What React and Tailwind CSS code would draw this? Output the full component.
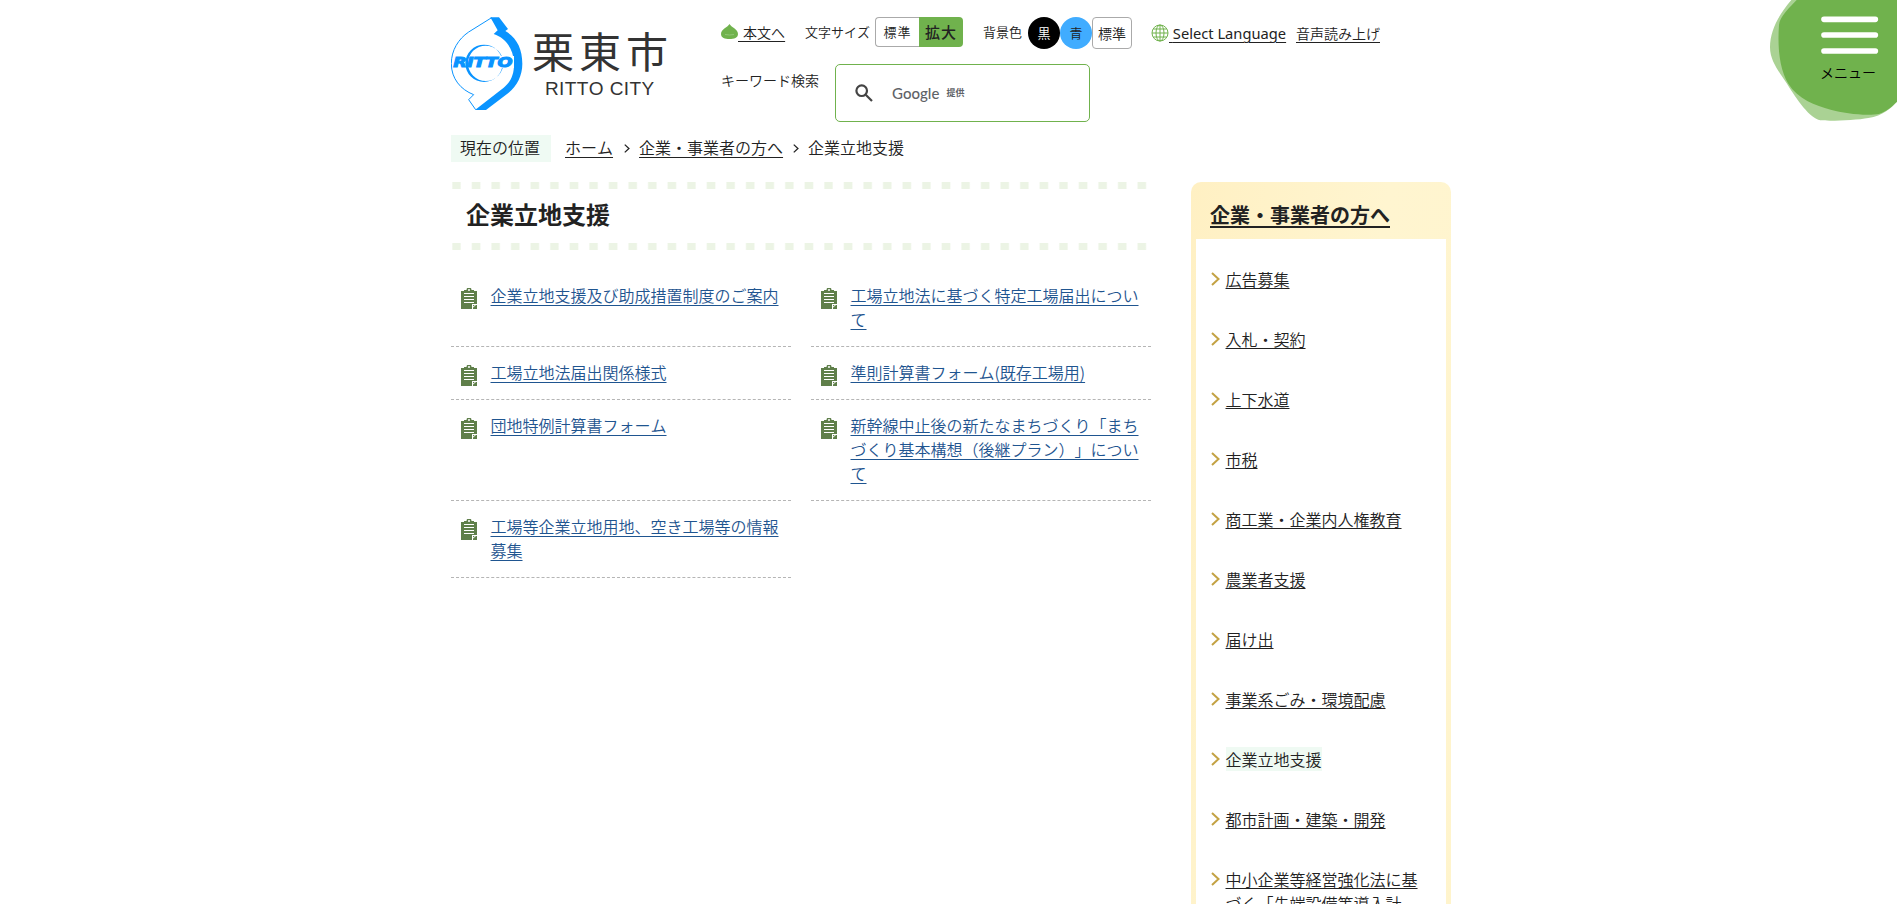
const pageLinks = [
  "企業立地支援及び助成措置制度のご案内",
  "工場立地法に基づく特定工場届出について",
  "工場立地法届出関係様式",
  "準則計算書フォーム(既存工場用)",
  "団地特例計算書フォーム",
  "新幹線中止後の新たなまちづくり「まちづくり基本構想（後継プラン）」について",
  "工場等企業立地用地、空き工場等の情報募集",
];

const sideLinks = [
  "広告募集",
  "入札・契約",
  "上下水道",
  "市税",
  "商工業・企業内人権教育",
  "農業者支援",
  "届け出",
  "事業系ごみ・環境配慮",
  "企業立地支援",
  "都市計画・建築・開発",
  "中小企業等経営強化法に基づく「先端設備等導入計画」",
];

const currentPage = "企業立地支援";

function Logo() {
  return (
    <a href="#" className="flex w-[270px] shrink-0">
      <svg viewBox="33 50 216 282" className="h-[94px] w-[72px] shrink-0">
        <path
          d="M155 52L86 95C55 116 34 150 34 190C34 235 62 268 101 283L86 298L107 328"
          fill="none"
          stroke="#0a94ff"
          strokeWidth="3"
        />
        <path
          d="M151 51H177L204 86L196 92C230 112 247 145 247 190C247 226 231 256 206 277L138 329H105L191 262C213 244 223 220 222 187C220 145 196 112 161 101L173 90Z"
          fill="#0a94ff"
        />
        <path
          fillRule="evenodd"
          d="M132 133A56 56 0 1 0 132 245A56 56 0 1 0 132 133ZM137 136A53 53 0 1 1 137 242A53 53 0 1 1 137 136Z"
          fill="#0a94ff"
        />
        <path d="M94 167H222V203H86Z" fill="#fff" />
        <text
          x="40"
          y="200"
          textLength="178"
          lengthAdjust="spacingAndGlyphs"
          fill="#0a94ff"
          stroke="#0a94ff"
          strokeWidth="3"
          className="font-['DejaVu_Sans',sans-serif] text-[40px] font-bold italic"
        >
          RITTO
        </text>
      </svg>
      <div className="ml-[9px] pt-[9px] text-[#333]">
        <div className="text-[42px] leading-[48px] font-normal tracking-[5px]">栗東市</div>
        <div className="mt-1 ml-[13px] font-['Liberation_Sans',sans-serif] text-[19px] leading-[22px] font-normal tracking-[0.4px] whitespace-nowrap">
          RITTO CITY
        </div>
      </div>
    </a>
  );
}

function GlobeIcon() {
  return (
    <svg viewBox="0 0 18 18" className="h-[18px] w-[18px]" fill="none" stroke="#70b24d">
      <circle cx="9" cy="9" r="8" />
      <ellipse cx="9" cy="9" rx="4" ry="8" />
      <path d="M9 1V17M1 9H17M2.3 5H15.7M2.3 13H15.7" />
    </svg>
  );
}

function ClipboardIcon() {
  return (
    <svg viewBox="0 0 16 21" className="mt-[5px] -mb-0.5 ml-2.5 h-[21px] w-4 shrink-0">
      <path
        fillRule="evenodd"
        d="M0 3H3V2H5.5A2.5 2.5 0 0 1 10.5 2H13V3H16V16H11V21H0ZM7 2A1 1 0 0 0 9 2A1 1 0 0 0 7 2Z"
        fill="#5f7f4a"
      />
      <path d="M12 21V17H16V21Z" fill="#5f7f4a" />
      <path d="M3 5.5H13M3 8.5H13M3 11.5H13M3 14.5H13" stroke="#fff" />
      <path d="M11 20L15 16.5" stroke="#fff" />
    </svg>
  );
}

function Chevron({ className }) {
  return (
    <svg viewBox="0 0 9 14" className={className} fill="none" stroke="currentColor">
      <path d="M1 1L7.5 7L1 13" />
    </svg>
  );
}

function Header() {
  return (
    <header className="flex h-[118px] pt-[17px]">
      <Logo />
      <div>
        <div className="flex h-8 text-sm leading-8">
          <a href="#" className="flex w-[84px] whitespace-pre">
            <svg viewBox="0 0 17 15" className="mt-[7px] h-[15px] w-[17px]">
              <path d="M8.5 0C10 3 17 5 17 10C17 14 13 15 8.5 15S0 14 0 10C0 5 7 3 8.5 0Z" fill="#70b24d" />
              <path d="M4 10.5Q8.5 11.5 13 10.5" fill="none" stroke="#91c776" />
            </svg>
            <span className="leading-[31px] underline underline-offset-[3px] [word-spacing:2px]"> 本文へ</span>
          </a>
          <span className="w-[70px] text-[13px] leading-[30px]">文字サイズ</span>
          <button className="h-[30px] w-11 rounded-l border border-r-0 border-[#aaa] text-[13px] leading-7 tracking-[1px]">
            標準
          </button>
          <button className="h-[30px] w-11 rounded-r bg-[#70b24d] text-[15px] leading-7 font-medium tracking-[1px]">
            拡大
          </button>
          <span className="ml-5 w-[45px] text-[13px] leading-[30px]">背景色</span>
          <button className="h-8 w-8 rounded-full bg-black text-[13px] text-white">黒</button>
          <button className="h-8 w-8 rounded-full bg-[#40acff] text-[13px]">青</button>
          <button className="h-8 w-10 rounded border border-[#aaa] leading-[29px]">標準</button>
          <a href="#" className="ml-[19px] flex whitespace-pre">
            <span className="mt-[7px] h-[18px]">
              <GlobeIcon />
            </span>
            <span className="w-[119px] font-['Noto_Sans',sans-serif] text-[14.7px] font-normal underline underline-offset-[3px]">
              {" "}
              Select Language
            </span>
          </a>
          <a href="#" className="ml-2 underline underline-offset-[3px]">
            音声読み上げ
          </a>
        </div>
        <div className="mt-[15px] flex">
          <span className="w-[114px] pt-1 text-sm leading-6">キーワード検索</span>
          <div className="flex h-[58px] w-[255px] items-center rounded-[5px] border border-[#70b24d] pl-[19px]">
            <svg viewBox="0 0 18 18" className="h-[18px] w-[18px]" fill="none" stroke="#444" strokeWidth="2.2">
              <circle cx="6.7" cy="6.7" r="5.3" />
              <path d="M10.7 10.7L17 17" />
            </svg>
            <span className="ml-[19px] font-['Lato',sans-serif] text-[15px] font-medium text-[#5f6368]">Google</span>
            <span className="ml-[7px] text-[9px] font-bold text-[#5f6368]">提供</span>
          </div>
        </div>
      </div>
    </header>
  );
}

function Breadcrumb() {
  return (
    <nav className="mt-[17px] flex h-[27px] items-center leading-[27px]">
      <span className="mr-3.5 h-[27px] bg-[#effaf3] pr-[11px] pl-[9px] leading-[25px]">現在の位置</span>
      <a href="#" className="-mt-0.5 underline underline-offset-[3px]">ホーム</a>
      <Chevron className="mr-2 ml-2.5 h-[9px] w-2 stroke-2" />
      <a href="#" className="-mt-0.5 underline underline-offset-[3px]">企業・事業者の方へ</a>
      <Chevron className="mr-2 ml-[9px] h-[9px] w-2 stroke-2" />
      <span className="-mt-0.5">{currentPage}</span>
    </nav>
  );
}

const dots =
  "h-[7px] bg-[repeating-linear-gradient(90deg,#fff_0,#fff_0.5px,#ecf4e5_2px,#ecf4e5_9px,#fff_10.5px,#fff_19.58px)]";

function Main() {
  return (
    <main className="w-[700px]">
      <div className={dots} />
      <h1 className="h-[54px] pl-[15px] text-2xl leading-[50px] font-bold">{currentPage}</h1>
      <div className={dots} />
      <ul className="mt-5 grid grid-cols-2 gap-x-5">
        {pageLinks.map((link) => (
          <li key={link} className="flex border-b border-dashed border-[#b5b5b5] pt-[13px] pb-[15px]">
            <ClipboardIcon />
            <a href="#" className="ml-[13.5px] w-[291px] break-all text-[#1f5590] underline underline-offset-[3px]">
              {link}
            </a>
          </li>
        ))}
      </ul>
    </main>
  );
}

function Sidebar() {
  return (
    <aside className="w-[260px] rounded-t-[10px] bg-[linear-gradient(100deg,#fff0c3,#fff5d0_50%,#fff4cc)] px-[5px]">
      <h2 className="h-[57px] pl-3.5 text-xl leading-[66px] font-bold">
        <a href="#" className="underline underline-offset-[3px]">企業・事業者の方へ</a>
      </h2>
      <ul className="flex flex-col gap-9 bg-white pt-7 pb-9 pl-[15px]">
        {sideLinks.map((link) => (
          <li key={link} className="flex">
            <Chevron className="mt-[5px] mr-[5.5px] h-3.5 w-[9px] shrink-0 stroke-2 text-[#c3a244]" />
            {link === currentPage ? (
              <span className="bg-[#effaf3]">{link}</span>
            ) : (
              <a href="#" className="max-w-[200px] underline underline-offset-2">{link}</a>
            )}
          </li>
        ))}
      </ul>
    </aside>
  );
}

function MenuButton() {
  return (
    <button className="absolute top-0 right-0 h-[121px] w-[127px]">
      <svg viewBox="0 0 381 363" className="h-[121px] w-[127px]">
        <path
          d="M64 0C28 42 0 90 0 142C0 185 31 220 50 250C82 301 119 355 151 361C175 364 260 361 295 354C340 346 361 326 381 305V0Z"
          fill="#aad294"
        />
        <path
          d="M80 0C60 22 29 49 27 75C22 145 29 208 55 251C82 296 137 317 182 329C224 340 291 349 329 341C350 334 365 320 381 305V0Z"
          fill="#70b24d"
        />
        <path d="M162 58H316M162 105H316M162 153H316" stroke="#fff" strokeWidth="17" strokeLinecap="round" />
      </svg>
      <span className="absolute top-[60px] left-[50px] text-sm leading-6 text-black">メニュー</span>
    </button>
  );
}

export default function App() {
  return (
    <div
      lang="ja"
      className="relative h-[904px] overflow-hidden bg-white pl-[451px] font-['Noto_Sans_CJK_JP',sans-serif] text-base leading-6 font-[350] text-[#222] [font-kerning:none] [text-spacing-trim:space-all]"
    >
      <MenuButton />
      <div className="w-[1000px]">
        <Header />
        <Breadcrumb />
        <div className="mt-5 flex justify-between">
          <Main />
          <Sidebar />
        </div>
      </div>
    </div>
  );
}
